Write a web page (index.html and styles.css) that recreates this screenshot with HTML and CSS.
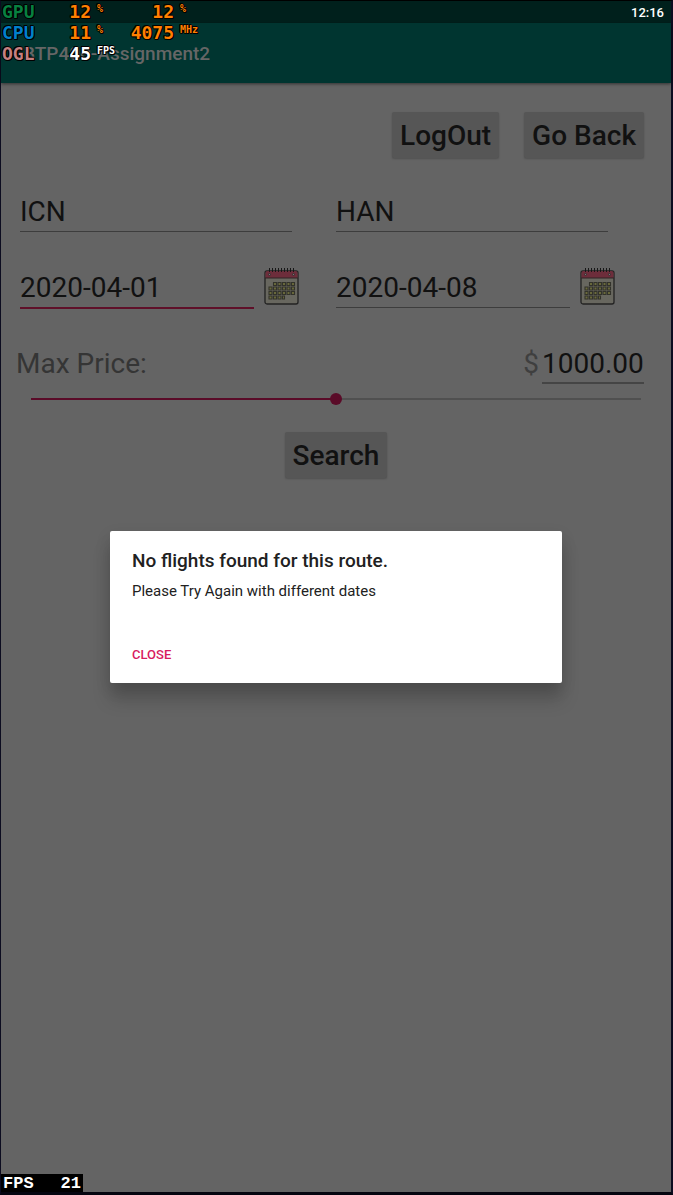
FILE: index.html
```html
<!DOCTYPE html>
<html lang="en">
<head>
<meta charset="utf-8">
<meta name="viewport" content="width=device-width, initial-scale=1">
<title>Assignment2</title>
<link rel="stylesheet" href="styles.css">
</head>
<body>
<svg class="sprite" aria-hidden="true">
  <symbol id="calendar" viewBox="0 0 35 37">
    <rect x="1" y="3" width="33" height="33" rx="2" fill="#68675f" stroke="#232323" stroke-width="1.3"/>
    <path d="M1.500 10V5q0-2 2-2h28q2 0 2 2v5z" fill="#6d2d3b"/>
    <path d="M1 10h33" stroke="#302427"/>
    <path d="M5.500 0v4M8.500 0v4M11.500 0v4M14.500 0v4M17.500 0v4M20.500 0v4M23.500 0v4M26.500 0v4M29.500 0v4" stroke="#171717"/>
    <circle cx="5.500" cy="6.500" r="1" fill="#777" stroke="#222" stroke-width=".6"/>
    <circle cx="29.500" cy="6.500" r="1" fill="#777" stroke="#222" stroke-width=".6"/>
    <g fill="#6b6a3c" stroke="#33332b" stroke-width="1.1">
      <path d="M9.500 14.500h3v3h-3zM14 14.500h3v3h-3zM18.500 14.500h3v3h-3zM23 14.500h3v3h-3zM27.500 14.500h3v3h-3z"/>
      <path d="M5 19h3v3H5zM9.500 19h3v3h-3zM14 19h3v3h-3zM18.500 19h3v3h-3zM23 19h3v3h-3zM27.500 19h3v3h-3z"/>
      <path d="M5 23.500h3v3H5zM9.500 23.500h3v3h-3zM14 23.500h3v3h-3zM18.500 23.500h3v3h-3zM23 23.500h3v3h-3zM27.500 23.500h3v3h-3z"/>
      <path d="M5 28h3v3H5zM9.500 28h3v3h-3zM14 28h3v3h-3zM18.500 28h2v3h-2z"/>
    </g>
  </symbol>
</svg>
<div class="device">
  <div class="status"><time>12:16</time></div>
  <header class="appbar"><h1>BTP400-Assignment2</h1></header>
  <main class="content">
    <div class="actions">
      <button class="btn" type="button">LogOut</button>
      <button class="btn" type="button">Go Back</button>
    </div>
    <div class="pair airports">
      <input class="field" type="text" value="ICN" aria-label="From">
      <input class="field" type="text" value="HAN" aria-label="To">
    </div>
    <div class="pair dates">
      <div class="date">
        <input class="field active" type="text" value="2020-04-01" aria-label="Departure date">
        <button class="pick" type="button" aria-label="Pick departure date"><svg><use href="#calendar"/></svg></button>
      </div>
      <div class="date">
        <input class="field" type="text" value="2020-04-08" aria-label="Return date">
        <button class="pick" type="button" aria-label="Pick return date"><svg><use href="#calendar"/></svg></button>
      </div>
    </div>
    <div class="price">
      <label for="price">Max Price:</label>
      <span class="currency">$</span>
      <input class="field amount" id="price" type="text" value="1000.00">
    </div>
    <input class="slider" type="range" min="0" max="2000" value="1000" aria-label="Max price">
    <button class="btn search" type="button">Search</button>
  </main>

  <div class="overlay">
    <section class="dialog" role="dialog" aria-labelledby="dialog-title">
      <h2 id="dialog-title">No flights found for this route.</h2>
      <p>Please Try Again with different dates</p>
      <button class="close" type="button">CLOSE</button>
    </section>
  </div>

  <div class="hud">
    <span class="gpu">GPU</span><b>12</b><small>%</small><b>12</b><small>%</small>
    <span class="cpu">CPU</span><b>11</b><small>%</small><b>4075</b><small>MHz</small>
    <span class="ogl">OGL</span><b class="white">45</b><small class="white">FPS</small>
  </div>
  <div class="fps"><span>FPS</span><span>21</span></div>
</div>
</body>
</html>
```
FILE: styles.css
```css
* { box-sizing: border-box; }

body {
  margin: 0;
  background: #0c0c20;
  font-family: Roboto, sans-serif;
  color: #111;
}

h1, h2, p { margin: 0; }

button, input { font: inherit; color: inherit; }

.sprite { position: absolute; width: 0; height: 0; }

.device {
  position: relative;
  display: flex;
  flex-direction: column;
  min-height: 100vh;
  border: solid #0c0c20;
  border-width: 1px 2px 3px 1px;
  border-top-color: #000;
  border-bottom-color: #050510;
  background: #646464;
}

.status {
  display: flex;
  justify-content: flex-end;
  align-items: center;
  height: 22px;
  padding-right: 7px;
  background: #00201c;
  color: #fff;
  font-size: 13px;
  font-weight: 500;
}

.appbar {
  display: flex;
  align-items: center;
  height: 60px;
  padding-left: 22px;
  background: #003530;
  box-shadow: 0 1px 3px rgba(0, 0, 0, .5);
  color: #666;
}

.appbar h1 { font-size: 19px; font-weight: 500; }

.content {
  display: flex;
  flex-direction: column;
  padding-top: 29px;
  font-size: 28px;
}

.actions {
  display: flex;
  justify-content: flex-end;
  gap: 25px;
  padding-right: 27px;
}

.btn {
  height: 46px;
  padding: 1px 8px 0;
  border: 0;
  border-radius: 2px;
  background: #565656;
  box-shadow: 0 1px 2px rgba(0, 0, 0, .2);
  font-weight: 500;
}

.pair { display: grid; grid-template-columns: 1fr 1fr; }

.airports { gap: 44px; margin-top: 34px; padding: 0 63px 0 19px; }

.dates { gap: 37px; margin-top: 36px; padding: 0 56px 0 19px; }

.date { display: flex; gap: 10px; }

.field {
  flex: 1;
  min-width: 0;
  width: 100%;
  height: 40px;
  padding: 0;
  border: 0;
  border-bottom: 1px solid #3d3d3d;
  border-radius: 0;
  outline: 0;
  background: transparent;
}

.field.active { box-shadow: 0 1px #5f1029; border-bottom-color: #5f1029; }

.pick {
  width: 35px;
  height: 37px;
  padding: 0;
  border: 0;
  background: none;
}

.pick svg { display: block; width: 35px; height: 37px; }

.price {
  display: flex;
  align-items: center;
  margin-top: 36px;
  padding: 0 27px 0 15px;
  line-height: 38px;
}

.price label { flex: 1; color: #353535; }

.currency { margin-right: 3px; color: #3f3f3f; }

.amount { flex: 0 0 102px; border-bottom-width: 2px; border-color: #454545; }

.slider {
  appearance: none;
  height: 14px;
  margin: 8px 30px 0;
  background: linear-gradient(#5a0b28, #5a0b28) left center / 50% 2px no-repeat,
    linear-gradient(#505050, #505050) center / 100% 2px no-repeat;
}

.slider::-webkit-slider-thumb {
  appearance: none;
  width: 12px;
  height: 12px;
  border-radius: 50%;
  background: #5a0b28;
}

.search { align-self: center; margin-top: 26px; }

.overlay {
  position: absolute;
  inset: 22px 0 2px;
  display: grid;
  place-items: center;
}

.dialog {
  width: calc(100% - 218px);
  padding: 19px 22px 18px;
  border-radius: 2px;
  background: #fff;
  box-shadow: 0 17px 18px rgba(0, 0, 0, .17), 0 6px 16px rgba(0, 0, 0, .12);
  color: #212121;
}

.dialog h2 { font-size: 19px; line-height: 22px; font-weight: 500; }

.dialog p { margin-top: 9px; font-size: 15px; line-height: 20px; }

.close {
  display: block;
  margin-top: 44px;
  padding: 0;
  border: 0;
  background: none;
  color: #d81b60;
  font-size: 13px;
  line-height: 20px;
  font-weight: 500;
}

.hud {
  position: absolute;
  top: 0;
  left: 1px;
  display: grid;
  grid-template-columns: 34px 55px 28px 55px 24px;
  grid-auto-rows: 21px;
  font: bold 18px/21px "DejaVu Sans Mono", monospace;
  color: #ff8000;
  text-shadow: 1px 0 #000, -1px 0 #000, 0 1px #000, 0 -1px #000, 1px 1px #000, -1px -1px #000;
}

.hud b { text-align: right; }

.hud small { padding-left: 6px; font-size: 10px; line-height: 16px; }

.gpu { color: #078040; }
.cpu { color: #0080cc; }
.ogl { color: #c58080; }
.hud .white { color: #fff; }

.fps {
  position: absolute;
  left: 0;
  bottom: 0;
  display: flex;
  justify-content: space-between;
  width: 82px;
  padding: 1px 2px 0;
  background: #000;
  color: #fff;
  font: bold 17px/17px "Liberation Mono", monospace;
}
```
